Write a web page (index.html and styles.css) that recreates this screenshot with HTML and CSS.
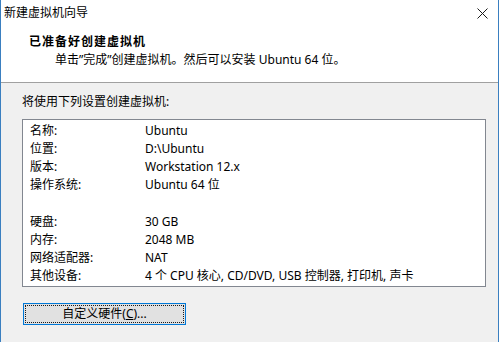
FILE: index.html
```html
<!DOCTYPE html>
<html lang="zh-CN">
<head>
<meta charset="utf-8">
<link rel="stylesheet" href="styles.css">
</head>
<body>
<div class="window">
  <div class="titlebar">
    <span class="title">新建虚拟机向导</span>
    <svg class="close" width="11" height="11" viewBox="0 0 11 11"><path d="M0.5 0.5 L10.5 10.5 M10.5 0.5 L0.5 10.5" stroke="#1a1a1a" stroke-width="1" fill="none"/></svg>
  </div>
  <div class="header">
    <div class="h-title">已准备好创建虚拟机</div>
    <div class="h-sub">单击”完成”创建虚拟机。然后可以安装 Ubuntu 64 位。</div>
  </div>
  <div class="body">
    <div class="intro">将使用下列设置创建虚拟机:</div>
    <div class="box">
      <div class="row"><span class="k">名称:</span><span class="v">Ubuntu</span></div>
      <div class="row"><span class="k">位置:</span><span class="v">D:\Ubuntu</span></div>
      <div class="row"><span class="k">版本:</span><span class="v">Workstation 12.x</span></div>
      <div class="row"><span class="k">操作系统:</span><span class="v">Ubuntu 64 位</span></div>
      <div class="row"><span class="k"></span><span class="v"></span></div>
      <div class="row"><span class="k">硬盘:</span><span class="v">30 GB</span></div>
      <div class="row"><span class="k">内存:</span><span class="v">2048 MB</span></div>
      <div class="row"><span class="k">网络适配器:</span><span class="v">NAT</span></div>
      <div class="row"><span class="k">其他设备:</span><span class="v">4 个 CPU 核心, CD/DVD, USB 控制器, 打印机, 声卡</span></div>
    </div>
    <div class="btn"><span class="btn-inner">自定义硬件(<u>C</u>)...</span></div>
  </div>
</div>
</body>
</html>
```
FILE: styles.css
```css
html, body {
  margin: 0;
  padding: 0;
}
body {
  font-family: "Noto Sans", "Noto Sans CJK SC", sans-serif;
  font-size: 12px;
  color: #000;
  background: #f0f0f0;
}
.window {
  height: 342px;
  box-sizing: border-box;
  border-left: 1px solid #3a7fc0;
  border-right: 1px solid #3a7fc0;
  display: flex;
  flex-direction: column;
}
.titlebar {
  height: 27px;
  background: #fff;
  display: flex;
  align-items: center;
  justify-content: space-between;
  padding: 0 10px 0 3px;
}
.title {
  line-height: 16px;
  margin-top: -1px;
}
.close {
  display: block;
  margin-top: -1px;
}
.header {
  background: #fff;
  height: 55px;
  border-bottom: 1px solid #a0a0a0;
  padding-left: 28px;
}
.h-title {
  font-weight: bold;
  letter-spacing: 1px;
  line-height: 18px;
  margin-top: 6px;
}
.h-sub {
  padding-left: 26px;
  line-height: 18px;
  margin-top: 0;
}
.body {
  flex: 1;
  background: #f0f0f0;
  padding: 10px 12px 0 21px;
}
.intro {
  line-height: 18px;
}
.box {
  margin-top: 8px;
  width: 464px;
  height: 168px;
  box-sizing: border-box;
  background: #fff;
  border: 1px solid #828790;
  padding: 2px 0 0 7px;
}
.row {
  display: flex;
  height: 18.14px;
  line-height: 18px;
}
.k {
  width: 115px;
  flex: none;
}
.btn {
  margin-top: 16px;
  margin-left: 1px;
  width: 163px;
  height: 22px;
  box-sizing: border-box;
  border: 1px solid #0078d7;
  background: #e1e1e1;
  padding: 1px;
}
.btn-inner {
  display: flex;
  align-items: center;
  justify-content: center;
  height: 100%;
  box-sizing: border-box;
  border: 1px dotted #1a1a1a;
  line-height: 16px;
}
```
